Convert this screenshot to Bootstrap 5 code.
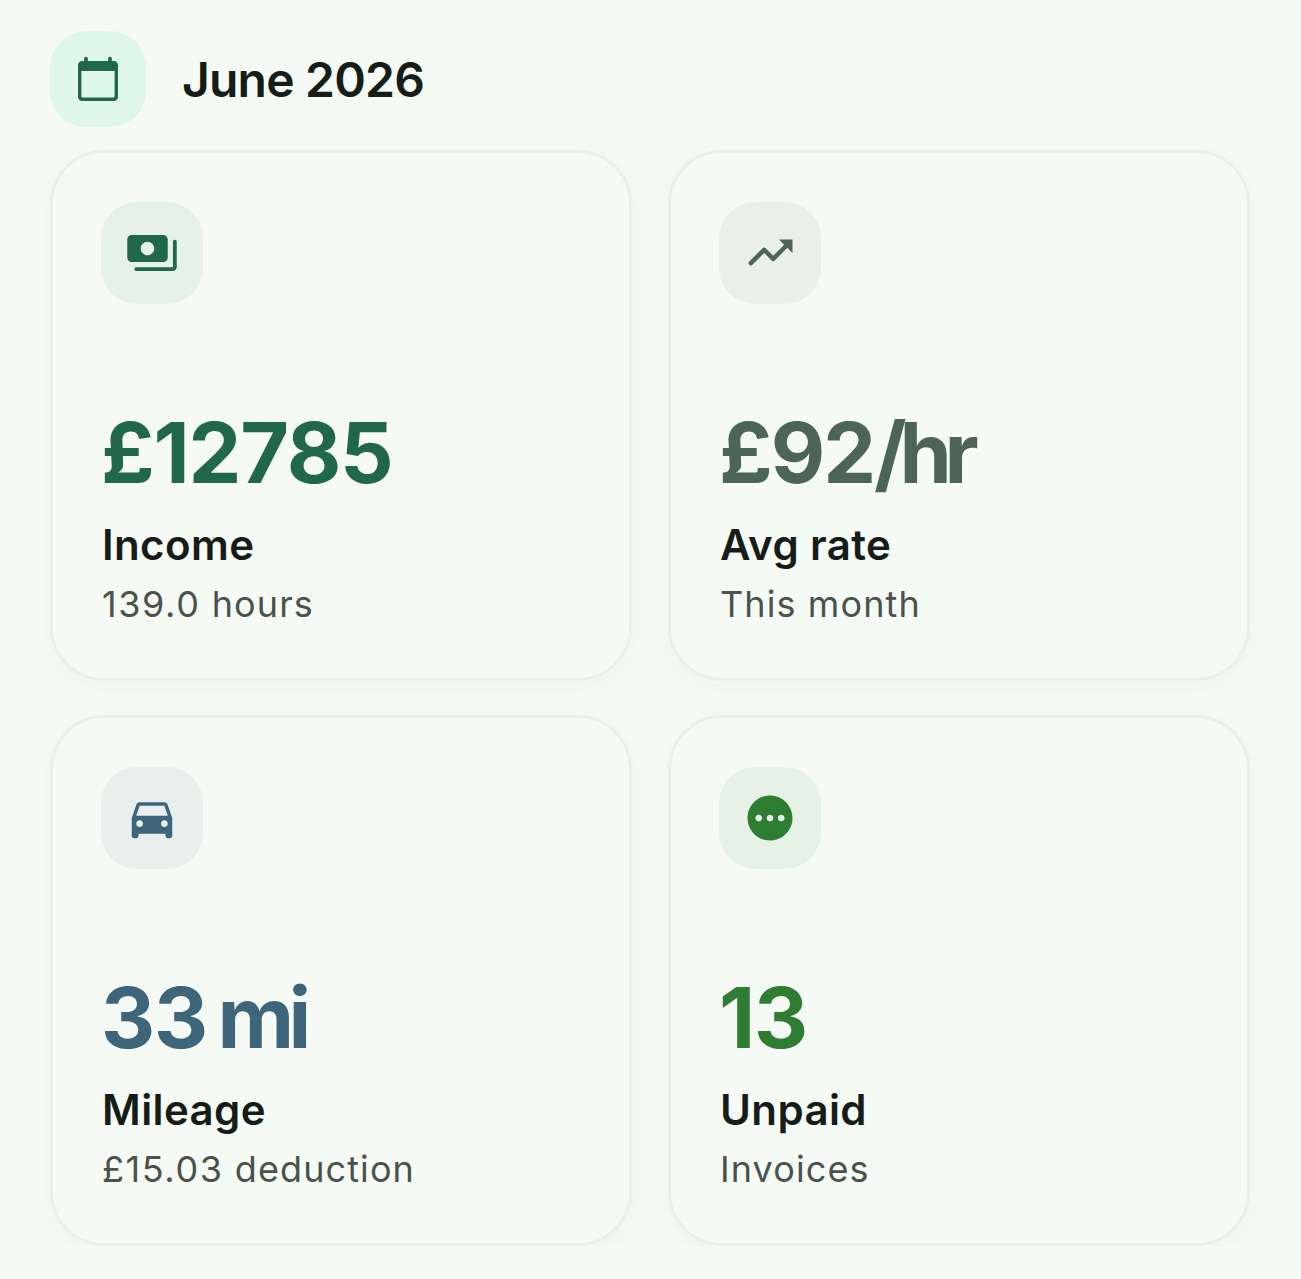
<!DOCTYPE html>
<html lang="en">
<head>
  <meta charset="UTF-8" />
  <meta name="viewport" content="width=device-width, initial-scale=1" />
  <title>June 2026</title>
  <link href="https://cdn.jsdelivr.net/npm/bootstrap@5.3.3/dist/css/bootstrap.min.css" rel="stylesheet" />
  <style>
    body {
      background: #f5faf4;
      color: #161d19;
      font-family: Inter, "Liberation Sans", sans-serif;
      padding: 31px 51px 0 50px;
    }
    .month-bar { margin-bottom: 23px; gap: 36px; }
    .month-icon {
      width: 96px;
      height: 96px;
      border-radius: 36px;
      background: #dff7e9;
      color: #21674c;
    }
    .month-icon svg { width: 48px; height: 48px; margin-top: -1px; }
    .month-title { font-size: 48px; font-weight: 600; line-height: 1; margin: 2px 0 0; letter-spacing: -0.8px; }
    .stat-grid { display: grid; grid-template-columns: 1fr 1fr; column-gap: 36px; row-gap: 34px; }
    .stat-card {
      height: 531px;
      padding: 49px 47px 0 48px;
      background: #f6faf5;
      border: 3px solid #ebefea;
      border-radius: 54px;
      box-shadow: 0 6px 24px rgba(30, 50, 40, 0.03);
    }
    .stat-icon {
      width: 102px;
      height: 102px;
      border-radius: 36px;
    }
    .stat-icon svg { width: 54px; height: 54px; fill: currentColor; }
    .stat-value {
      margin-top: 99px;
      font-size: 84px;
      font-weight: 700;
      line-height: 100px;
      letter-spacing: -1.2px;
      word-spacing: -4px;
    }
    .stat-unit { letter-spacing: -5.5px; }
    .stat-rate-num { letter-spacing: -2px; }
    .stat-rate-unit { letter-spacing: -7.2px; }
    .stat-label {
      margin: 17px 0 0 1px;
      font-size: 42px;
      font-weight: 600;
      line-height: 50px;
      letter-spacing: 0.4px;
      color: #161d19;
    }
    .stat-note {
      margin: 9px 0 0 1px;
      font-size: 36px;
      font-weight: 400;
      line-height: 50px;
      letter-spacing: 1.1px;
      color: #4a524d;
    }
    .note-num { letter-spacing: 1.6px; }
    .tone-income { color: #21674c; }
    .tone-income .stat-icon { background: #e7f1eb; }
    .tone-rate { color: #4d6558; }
    .tone-rate .stat-icon { background: #e9f0ea; }
    .tone-miles { color: #3f657b; }
    .tone-miles .stat-icon { background: #e8efec; }
    .tone-unpaid { color: #2e7d32; }
    .tone-unpaid .stat-icon { background: #e7f2e7; }
  </style>
</head>
<body>

  <!-- Month header -->
  <div class="d-flex align-items-center month-bar">
    <div class="month-icon d-flex align-items-center justify-content-center">
      <svg viewBox="0 0 24 24" fill="currentColor"><path d="M6 .9c.5 0 .9.4.9.9V3h10.200V1.800a.9.9 0 0 1 1.800 0V3H20c1.100 0 2 .9 2 2v16c0 1.100-.9 2-2 2H4c-1.100 0-2-.9-2-2V5c0-1.100.9-2 2-2h1.100V1.800c0-.5.4-.9.9-.9zM3.700 8v12.600c0 .4.3.7.7.7h15.200c.4 0 .7-.3.7-.7V8z"/></svg>
    </div>
    <h1 class="month-title">June 2026</h1>
  </div>

  <div class="stat-grid">
    <!-- Income -->
    <div class="stat-card tone-income">
      <div class="stat-icon d-flex align-items-center justify-content-center">
        <svg viewBox="0 0 24 24"><path d="M19 14V6c0-1.100-.9-2-2-2H3c-1.100 0-2 .9-2 2v8c0 1.100.9 2 2 2h14c1.100 0 2-.9 2-2zm-9-1c-1.660 0-3-1.340-3-3s1.340-3 3-3 3 1.340 3 3-1.340 3-3 3zm13-6v11.200c0 1-.8 1.800-1.800 1.800H5a.85.85 0 0 1 0-1.700h16.100c.1 0 .2-.1.200-.2V7a.85.85 0 0 1 1.700 0z"/></svg>
      </div>
      <div class="stat-value">£12785</div>
      <div class="stat-label">Income</div>
      <div class="stat-note"><span class="note-num">139.0</span> hours</div>
    </div>

    <!-- Avg rate -->
    <div class="stat-card tone-rate">
      <div class="stat-icon d-flex align-items-center justify-content-center">
        <svg viewBox="0 0 24 24"><path d="M16 6l2.290 2.290-4.880 4.880-3.300-3.300a1 1 0 0 0-1.410 0L2.700 15.880a1 1 0 0 0 1.410 1.410L9.400 12l3.300 3.300a1 1 0 0 0 1.410 0l5.600-5.590L22 12V6z"/></svg>
      </div>
      <div class="stat-value"><span class="stat-rate-num">£92</span><span class="stat-rate-unit">/hr</span></div>
      <div class="stat-label">Avg rate</div>
      <div class="stat-note">This month</div>
    </div>

    <!-- Mileage -->
    <div class="stat-card tone-miles">
      <div class="stat-icon d-flex align-items-center justify-content-center">
        <svg viewBox="0 0 24 24"><path d="M18.920 6.010C18.720 5.420 18.160 5 17.500 5h-11c-.66 0-1.210.42-1.420 1.010L3 12v8c0 .55.45 1 1 1h1c.55 0 1-.45 1-1v-1h12v1c0 .55.45 1 1 1h1c.55 0 1-.45 1-1v-8l-2.080-5.990zM6.500 16c-.83 0-1.500-.67-1.500-1.500S5.670 13 6.500 13s1.500.67 1.500 1.500S7.330 16 6.500 16zm11 0c-.83 0-1.500-.67-1.500-1.500s.67-1.500 1.500-1.500 1.500.67 1.500 1.500-.67 1.500-1.500 1.500zM5 11l1.500-4.500h11L19 11H5z"/></svg>
      </div>
      <div class="stat-value">33<span class="stat-unit"> mi</span></div>
      <div class="stat-label">Mileage</div>
      <div class="stat-note"><span class="note-num">£15.03</span> deduction</div>
    </div>

    <!-- Unpaid -->
    <div class="stat-card tone-unpaid">
      <div class="stat-icon d-flex align-items-center justify-content-center">
        <svg viewBox="0 0 24 24"><path d="M12 2C6.480 2 2 6.480 2 12s4.480 10 10 10 10-4.480 10-10S17.520 2 12 2zM7 13.500c-.83 0-1.500-.67-1.500-1.500s.67-1.500 1.500-1.500 1.500.67 1.500 1.500-.67 1.500-1.500 1.500zm5 0c-.83 0-1.500-.67-1.500-1.500s.67-1.500 1.500-1.500 1.500.67 1.500 1.500-.67 1.500-1.500 1.500zm5 0c-.83 0-1.500-.67-1.500-1.500s.67-1.500 1.500-1.500 1.500.67 1.500 1.500-.67 1.500-1.500 1.500z"/></svg>
      </div>
      <div class="stat-value">13</div>
      <div class="stat-label">Unpaid</div>
      <div class="stat-note">Invoices</div>
    </div>
  </div>

  <script src="https://cdn.jsdelivr.net/npm/bootstrap@5.3.3/dist/js/bootstrap.bundle.min.js"></script>
</body>
</html>
